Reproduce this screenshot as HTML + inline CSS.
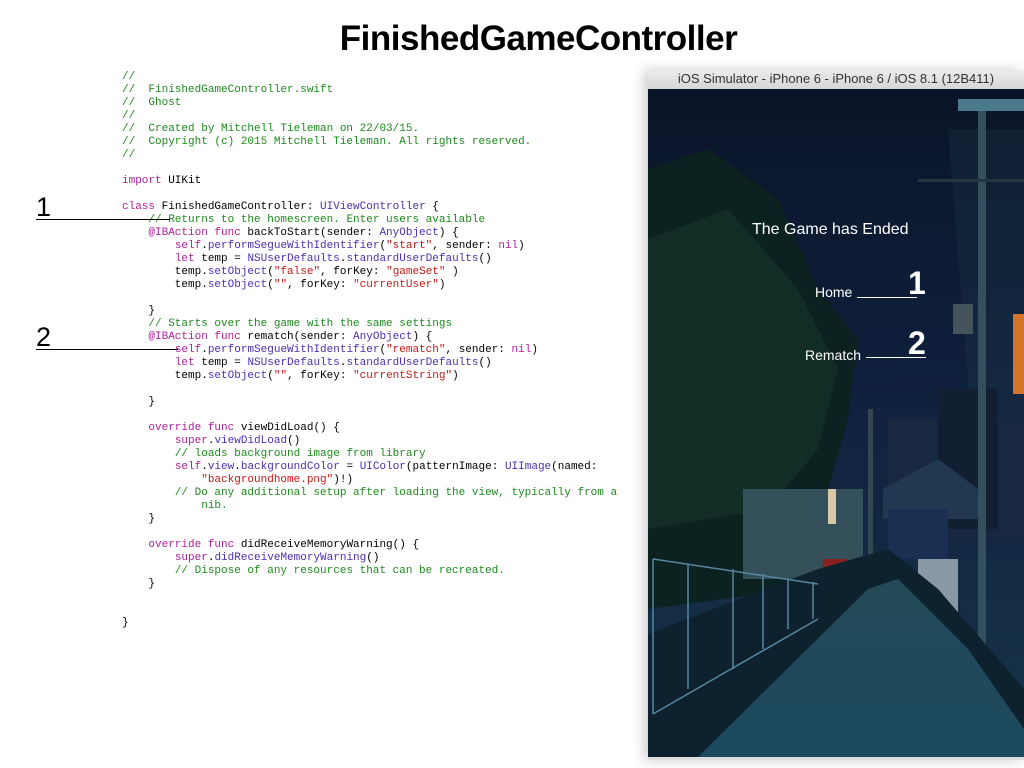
<!DOCTYPE html>
<html><head><meta charset="utf-8"><style>
body{margin:0;width:1024px;height:768px;background:#fff;position:relative;overflow:hidden;font-family:"Liberation Sans",sans-serif}
h1{position:absolute;left:0;width:1077px;top:19px;margin:0;text-align:center;font-size:35px;font-weight:bold;color:#000;letter-spacing:-0.5px}
pre{position:absolute;left:122px;top:71px;margin:0;font-family:"Liberation Mono",monospace;font-size:11px;line-height:13px;color:#000}
.c{color:#1d8a1d}.k{color:#b1209a}.t{color:#4c2fb0}.s{color:#c41a16}
.n{position:absolute;font-size:27px;font-weight:300;color:#000}
.ln{position:absolute;height:1px;background:#000}
#sim{position:absolute;left:648px;top:70px;width:376px;height:690px;background:#ddd;box-shadow:-4px 0 12px rgba(0,0,0,.2)}
#tb{height:19px;background:linear-gradient(#ececec,#d6d6d6);border-bottom:1px solid #aaa;font-size:13px;color:#333;text-align:center;line-height:18px}
#scr{position:absolute;left:0;top:19px;width:376px;height:668px;overflow:hidden}
.w{position:absolute;color:#fff;font-size:16px}
</style></head><body>
<h1>FinishedGameController</h1>
<pre><span class="c">//
//  FinishedGameController.swift
//  Ghost
//
//  Created by Mitchell Tieleman on 22/03/15.
//  Copyright (c) 2015 Mitchell Tieleman. All rights reserved.
//</span>

<span class="k">import</span> UIKit

<span class="k">class</span> FinishedGameController: <span class="t">UIViewController</span> {
    <span class="c">// Returns to the homescreen. Enter users available</span>
    <span class="k">@IBAction func</span> backToStart(sender: <span class="t">AnyObject</span>) {
        <span class="k">self</span>.<span class="t">performSegueWithIdentifier</span>(<span class="s">"start"</span>, sender: <span class="k">nil</span>)
        <span class="k">let</span> temp = <span class="t">NSUserDefaults</span>.<span class="t">standardUserDefaults</span>()
        temp.<span class="t">setObject</span>(<span class="s">"false"</span>, forKey: <span class="s">"gameSet"</span> )
        temp.<span class="t">setObject</span>(<span class="s">""</span>, forKey: <span class="s">"currentUser"</span>)

    }
    <span class="c">// Starts over the game with the same settings</span>
    <span class="k">@IBAction func</span> rematch(sender: <span class="t">AnyObject</span>) {
        <span class="k">self</span>.<span class="t">performSegueWithIdentifier</span>(<span class="s">"rematch"</span>, sender: <span class="k">nil</span>)
        <span class="k">let</span> temp = <span class="t">NSUserDefaults</span>.<span class="t">standardUserDefaults</span>()
        temp.<span class="t">setObject</span>(<span class="s">""</span>, forKey: <span class="s">"currentString"</span>)

    }

    <span class="k">override func</span> viewDidLoad() {
        <span class="k">super</span>.<span class="t">viewDidLoad</span>()
        <span class="c">// loads background image from library</span>
        <span class="k">self</span>.<span class="t">view</span>.<span class="t">backgroundColor</span> = <span class="t">UIColor</span>(patternImage: <span class="t">UIImage</span>(named:
            <span class="s">"backgroundhome.png"</span>)!)
        <span class="c">// Do any additional setup after loading the view, typically from a
            nib.</span>
    }

    <span class="k">override func</span> didReceiveMemoryWarning() {
        <span class="k">super</span>.<span class="t">didReceiveMemoryWarning</span>()
        <span class="c">// Dispose of any resources that can be recreated.</span>
    }


}</pre>
<div class="n" style="left:36px;top:192px">1</div>
<div class="ln" style="left:36px;top:219px;width:134px"></div>
<div class="n" style="left:36px;top:322px">2</div>
<div class="ln" style="left:36px;top:349px;width:142px"></div>
<div id="sim"><div id="tb">iOS Simulator - iPhone 6 - iPhone 6 / iOS 8.1 (12B411)</div>
<div id="scr">
<svg width="376" height="668" viewBox="0 0 376 668">
<defs>
<linearGradient id="sky" x1="0" y1="0" x2="0" y2="1"><stop offset="0" stop-color="#0a1428"/><stop offset=".5" stop-color="#102240"/><stop offset="1" stop-color="#173447"/></linearGradient>
<linearGradient id="rd" x1="0" y1="0" x2="0" y2="1"><stop offset="0" stop-color="#244a58"/><stop offset="1" stop-color="#1b4a5e"/></linearGradient>
</defs>
<rect width="376" height="668" fill="url(#sky)"/>
<polygon points="300,40 376,40 376,420 330,420" fill="#1a3344" opacity=".4"/>
<rect x="240" y="330" width="136" height="120" fill="#172840"/>
<rect x="290" y="300" width="60" height="140" fill="#121f33"/>
<polygon points="235,400 290,370 330,400 330,430 235,430" fill="#223750"/>
<rect x="240" y="420" width="60" height="50" fill="#1a2f52"/>
<rect x="365" y="225" width="11" height="80" fill="#d6742a"/>
<rect x="330" y="20" width="8" height="600" fill="#34505f"/>
<rect x="310" y="10" width="66" height="12" fill="#4b7a8c"/>
<rect x="270" y="90" width="106" height="3" fill="#26343f"/>
<rect x="305" y="215" width="20" height="30" fill="#44545a"/>
<rect x="220" y="320" width="5" height="250" fill="#34464f"/>
<rect x="270" y="470" width="40" height="80" fill="#8898a4"/>
<polygon points="0,80 60,60 130,110 170,200 210,250 200,330 175,420 150,500 0,520" fill="#0c2220"/>
<polygon points="0,150 80,120 150,200 190,280 170,360 120,420 0,440" fill="#143028" opacity=".8"/>
<rect x="95" y="400" width="120" height="90" fill="#34505a"/>
<rect x="180" y="400" width="8" height="35" fill="#d8c8a4"/>
<rect x="175" y="470" width="25" height="75" fill="#8b2020"/>
<polygon points="0,545 170,480 240,460 290,500 376,600 376,668 0,668" fill="#0d222e"/>
<polygon points="50,668 220,500 250,490 320,560 376,640 376,668" fill="url(#rd)"/>
<g stroke="#5686a0" stroke-width="1.5" fill="none"><path d="M5,470 L170,495 M5,470 V625 M40,475 V600 M85,480 V580 M115,485 V560 M140,490 V540 M165,493 V530 M5,625 L170,530"/></g>
</svg>
<div class="w" style="left:104px;top:132px">The Game has Ended</div>
<div class="w" style="left:167px;top:195px;font-size:14px">Home</div>
<div class="ln" style="left:209px;top:208px;width:60px;background:#fff"></div>
<div class="w" style="left:260px;top:176px;font-size:32px;font-weight:bold">1</div>
<div class="w" style="left:157px;top:258px;font-size:14px">Rematch</div>
<div class="ln" style="left:218px;top:268px;width:60px;background:#fff"></div>
<div class="w" style="left:260px;top:236px;font-size:32px;font-weight:bold">2</div>
</div></div>
</body></html>
